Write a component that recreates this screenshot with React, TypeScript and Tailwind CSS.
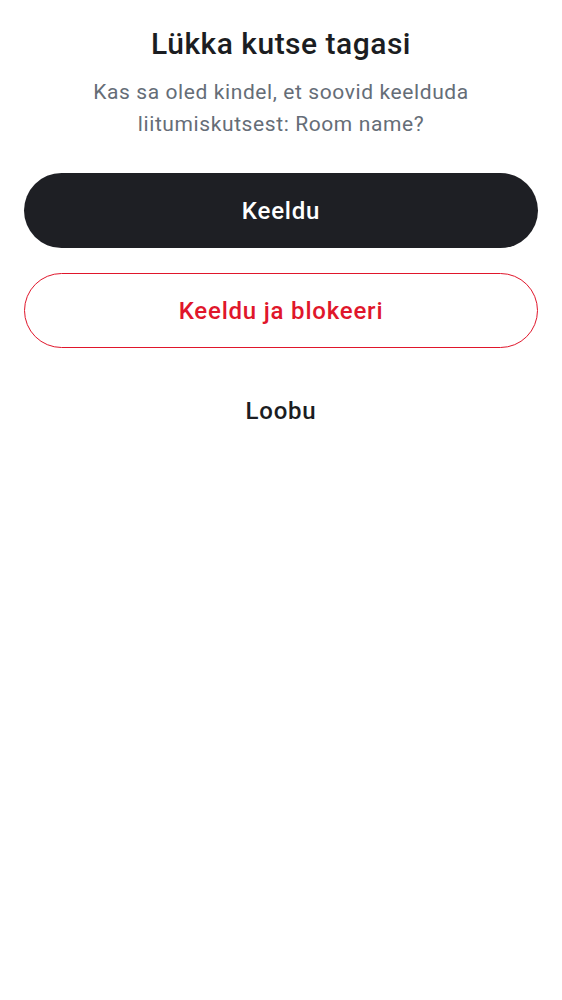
export default function App() {
  return (
    <div className="min-h-screen bg-white flex flex-col items-center px-[24px] pt-[24px]" style={{ fontFamily: "Roboto, 'Noto Sans', sans-serif" }}>
      <h1 className="text-[30px] leading-[40px] font-medium tracking-[0.5px] text-[#1b1d22] text-center">Lükka kutse tagasi</h1>
      <p className="mt-[12px] text-[21px] leading-[32px] tracking-[0.6px] text-[#656d77] text-center max-w-[440px]">
        Kas sa oled kindel, et soovid keelduda liitumiskutsest: Room name?
      </p>
      <div className="w-full mt-[33px] flex flex-col gap-[25px]">
        <button className="w-full h-[75px] rounded-full bg-[#1e1f24] text-white text-[24px] font-medium tracking-[0.8px]">Keeldu</button>
        <button className="w-full h-[75px] rounded-full border border-[#e0162b] text-[#e0162b] text-[24px] font-medium tracking-[0.8px]">Keeldu ja blokeeri</button>
        <button className="w-full h-[75px] text-[#1b1d22] text-[24px] font-medium tracking-[0.8px]">Loobu</button>
      </div>
    </div>
  );
}
